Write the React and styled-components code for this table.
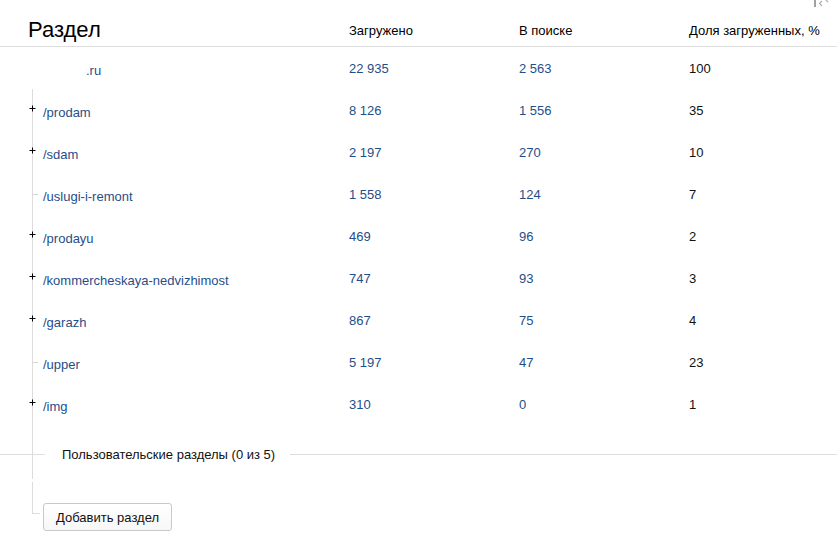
import React from "react";
import styled, { createGlobalStyle } from "styled-components";

const GlobalStyle = createGlobalStyle`
  body {
    margin: 0;
    background: #fff;
    font-family: "Liberation Sans", Arial, sans-serif;
    font-size: 13px;
    color: #000;
  }
`;

const COLS = "349px 170px 170px 1fr";

const Page = styled.div`
  width: 837px;
  height: 542px;
  overflow: hidden;
  position: relative;
`;

const Header = styled.div`
  display: grid;
  grid-template-columns: ${COLS};
  align-items: start;
  height: 46px;
  border-bottom: 1px solid #dedede;
  position: relative;
`;

const Heading = styled.h2`
  margin: 0;
  padding: 19px 0 0 28px;
  font-size: 22px;
  line-height: 22px;
  font-weight: normal;
`;

const ColLabel = styled.div`
  padding-top: 23px;
  line-height: 15px;
`;

const CornerIcon = styled.svg`
  position: absolute;
  top: 0;
  right: 4px;
`;

const Row = styled.div`
  display: grid;
  grid-template-columns: ${COLS};
  height: 42px;
  line-height: 15px;
`;

const Cell = styled.div`
  padding-top: 14px;
  color: ${(p) => (p.$plain ? "#111" : "#1f4e8a")};
`;

const NameCell = styled.div`
  display: flex;
  align-items: flex-start;
  padding-top: 16px;
  padding-left: ${(p) => (p.$root ? "86px" : "29px")};
`;

const Marker = styled.svg`
  flex: none;
  margin-top: ${(p) => (p.$leaf ? "2px" : "0")};
`;

const Link = styled.a`
  color: #1f4e8a;
  text-decoration: none;
  margin-left: ${(p) => (p.$root ? "0" : "4px")};
  cursor: pointer;
`;

const Tree = styled.div`
  background: linear-gradient(#dcdcdc, #dcdcdc) no-repeat 32px 0 / 1px calc(100% - 3px);
`;

const Separator = styled.div`
  display: flex;
  align-items: center;
  height: 57px;
  padding-top: 1px;
  box-sizing: border-box;
`;

const Rule = styled.div`
  height: 1px;
  background: #dedede;
  flex: ${(p) => (p.$grow ? "1" : "none")};
  width: ${(p) => (p.$grow ? "auto" : "45px")};
`;

const SeparatorText = styled.span`
  padding: 0 15px 0 17px;
  line-height: 15px;
  white-space: nowrap;
  color: #111;
`;

const AddRow = styled.div`
  display: flex;
  align-items: flex-start;
  padding-left: 32px;
`;

const Elbow = styled.div`
  width: 7px;
  height: 31px;
  border-left: 1px solid #dcdcdc;
  border-bottom: 1px solid #dcdcdc;
`;

const Button = styled.button`
  margin: 21px 0 0 3px;
  height: 28px;
  padding: 0 12px;
  border: 1px solid #c9c9c9;
  border-radius: 3px;
  background: linear-gradient(#ffffff, #f7f7f7);
  font-family: "Liberation Sans", Arial, sans-serif;
  font-size: 13px;
  color: #111;
  cursor: pointer;
`;

const sections = [
  { name: "/prodam", loaded: "8 126", search: "1 556", share: "35", more: true },
  { name: "/sdam", loaded: "2 197", search: "270", share: "10", more: true },
  { name: "/uslugi-i-remont", loaded: "1 558", search: "124", share: "7" },
  { name: "/prodayu", loaded: "469", search: "96", share: "2", more: true },
  { name: "/kommercheskaya-nedvizhimost", loaded: "747", search: "93", share: "3", more: true },
  { name: "/garazh", loaded: "867", search: "75", share: "4", more: true },
  { name: "/upper", loaded: "5 197", search: "47", share: "23" },
  { name: "/img", loaded: "310", search: "0", share: "1", more: true },
];

function Plus() {
  return (
    <Marker width="10" height="7" viewBox="0 0 10 7">
      <path d="M0.5 3.5H6.5M3.5 0.5V6.5" stroke="#000" strokeWidth="1" />
    </Marker>
  );
}

function Tick() {
  return (
    <Marker $leaf width="10" height="7" viewBox="0 0 10 7">
      <path d="M4 3.5H9" stroke="#d8d8d8" strokeWidth="1" />
    </Marker>
  );
}

export default function App() {
  return (
    <Page>
      <GlobalStyle />
      <Header>
        <Heading>Раздел</Heading>
        <ColLabel>Загружено</ColLabel>
        <ColLabel>В поиске</ColLabel>
        <ColLabel>Доля загруженных, %</ColLabel>
        <CornerIcon width="20" height="8" viewBox="0 0 20 8">
          <rect x="1" y="0" width="2" height="7" fill="#a0a0a0" />
          <path d="M9 1L6.5 3.5L9 6" stroke="#b0b0b0" strokeWidth="1.2" fill="none" />
          <path d="M13 0L15 2" stroke="#b0b0b0" strokeWidth="1.2" fill="none" />
        </CornerIcon>
      </Header>

      <Row>
        <NameCell $root>
          <Link $root>.ru</Link>
        </NameCell>
        <Cell>22 935</Cell>
        <Cell>2 563</Cell>
        <Cell $plain>100</Cell>
      </Row>

      <Tree>
        {sections.map((s) => (
          <Row key={s.name}>
            <NameCell>
              {s.more ? <Plus /> : <Tick />}
              <Link>{s.name}</Link>
            </NameCell>
            <Cell>{s.loaded}</Cell>
            <Cell>{s.search}</Cell>
            <Cell $plain>{s.share}</Cell>
          </Row>
        ))}
        <Separator>
          <Rule />
          <SeparatorText>Пользовательские разделы (0 из 5)</SeparatorText>
          <Rule $grow />
        </Separator>
      </Tree>

      <AddRow>
        <Elbow />
        <Button>Добавить раздел</Button>
      </AddRow>
    </Page>
  );
}
